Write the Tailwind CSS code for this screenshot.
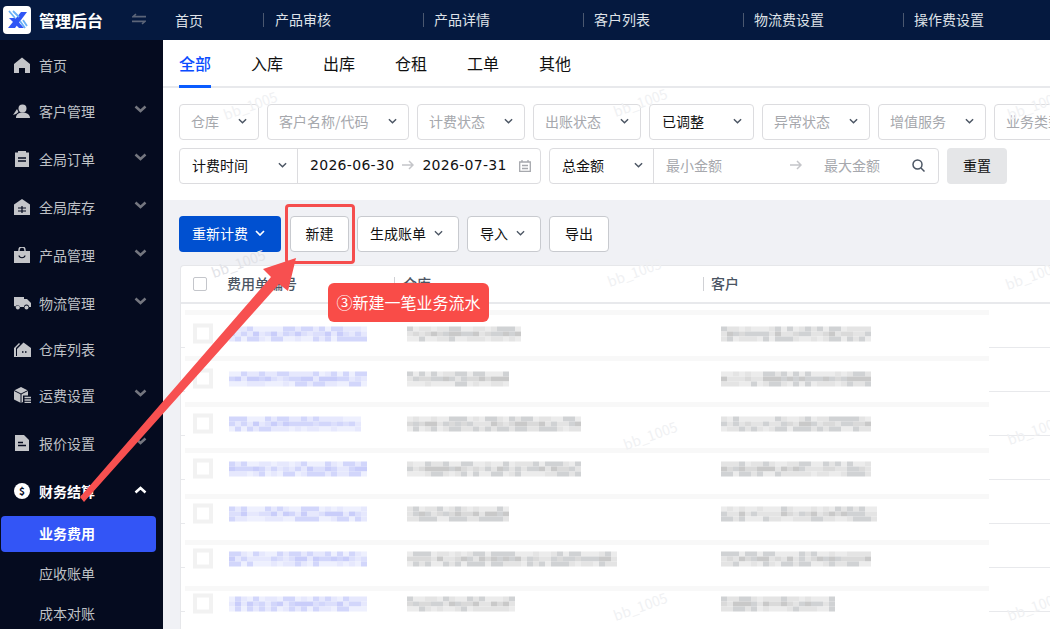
<!DOCTYPE html>
<html lang="zh-CN">
<head>
  <meta charset="UTF-8" />
  <title>业务费用 | 管理后台</title>
  <script src="https://cdn.jsdelivr.net/npm/@tailwindcss/browser@4"></script>
</head>
<body class="bg-white font-['Noto_Sans_CJK_SC','Liberation_Sans',sans-serif] text-sm text-[#111]">
<div class="relative flex h-[629px] w-[1050px] flex-col overflow-hidden">

  <!-- Top bar -->
  <header class="flex h-10 shrink-0 bg-[#05193f] text-[#dfe2e8]">
    <div class="flex w-[163px] shrink-0 items-center pl-[3px]">
      <div class="flex h-7 w-7 items-center justify-center rounded-[4px] bg-white">
        <svg width="28" height="28" viewBox="0 0 28 28">
          <path d="M24 6h-6L5 22h7z" fill="#2f55f5"/>
          <path d="M6 12h6l9 10h-5z" fill="#2f55f5"/>
          <path d="M6 5l6 7M10 5l6 6M17 15l5 7M20 14l4 6" stroke="#6ab0f7" stroke-width="1.800" fill="none"/>
        </svg>
      </div>
      <span class="ml-2 text-base leading-none font-bold text-white">管理后台</span>
      <svg class="ml-[29px] -translate-y-[1px]" width="14" height="12" viewBox="0 0 14 12" fill="none" stroke="#5c6579" stroke-width="1.600">
        <path d="M4 1 1 3.600h13M10 11l3-2.600H0"/>
      </svg>
    </div>
    <nav class="flex items-center pl-3">
      <div class="w-[88px]">首页</div>
      <div class="w-40 border-l border-[#4b5870] pl-[11px] leading-[14px]"><span class="relative top-[-1px]">产品审核</span></div>
      <div class="w-40 border-l border-[#4b5870] pl-[10px] leading-[14px]"><span class="relative top-[-1px]">产品详情</span></div>
      <div class="w-40 border-l border-[#4b5870] pl-[10px] leading-[14px]"><span class="relative top-[-1px]">客户列表</span></div>
      <div class="w-40 border-l border-[#4b5870] pl-[10px] leading-[14px]"><span class="relative top-[-1px]">物流费设置</span></div>
      <div class="w-[146px] border-l border-[#4b5870] pl-[10px] leading-[14px]"><span class="relative top-[-1px]">操作费设置</span></div>
    </nav>
  </header>

  <div class="flex min-h-0 flex-1">
    <!-- Sidebar -->
    <aside class="w-[163px] shrink-0 overflow-hidden bg-[#050b1f] text-[#bfc1c6]">
      <div class="mt-[5px] flex h-10 items-center pl-[14px]">
        <svg class="mr-[9px]" width="16" height="16" viewBox="0 0 16 16" fill="#c4c5c9"><path d="M8 .5 16 7v9h-5v-5H5v5H0V7z"/></svg>首页
      </div>
      <div class="mt-[6px] flex h-10 items-center justify-between pr-[16px] pl-[13px]">
        <span class="flex items-center"><svg class="mr-[9px]" width="17" height="14" viewBox="0 0 17 14" fill="#c4c5c9"><circle cx="9.500" cy="4.500" r="4"/><path d="M3 14c0-4 3-5.500 6.500-5.500S17 10 17 14zM0 11l4-6 1.500 3L3 10z"/></svg>客户管理</span>
        <svg class="-translate-y-[2px]" width="13" height="8" viewBox="0 0 13 8" fill="none" stroke="#74767f" stroke-width="2.500"><path d="m1.500 1.500 5 4.500 5-4.500"/></svg>
      </div>
      <div class="mt-2 flex h-10 items-center justify-between pr-[16px] pl-[14px]">
        <span class="flex items-center"><svg class="mr-[9px]" width="16" height="16" viewBox="0 0 16 16"><path d="M1 1.500h3V0h8v1.500h3V16H1z" fill="#c4c5c9"/><path d="M4 7h8M4 10h8" stroke="#050b1f" stroke-width="1.300"/></svg>全局订单</span>
        <svg class="-translate-y-[2px]" width="13" height="8" viewBox="0 0 13 8" fill="none" stroke="#74767f" stroke-width="2.500"><path d="m1.500 1.500 5 4.500 5-4.500"/></svg>
      </div>
      <div class="mt-2 flex h-10 items-center justify-between pr-[16px] pl-[14px]">
        <span class="flex items-center"><svg class="mr-[9px]" width="16" height="16" viewBox="0 0 16 16"><path d="M8 0l8 5.500V16H0V5.500z" fill="#c4c5c9"/><path d="M4 9h8M4 12h8M8 7v7" stroke="#050b1f" stroke-width="1.200"/></svg>全局库存</span>
        <svg class="-translate-y-[2px]" width="13" height="8" viewBox="0 0 13 8" fill="none" stroke="#74767f" stroke-width="2.500"><path d="m1.500 1.500 5 4.500 5-4.500"/></svg>
      </div>
      <div class="mt-2 flex h-10 items-center justify-between pr-[16px] pl-[14px]">
        <span class="flex items-center"><svg class="mr-[9px]" width="16" height="16" viewBox="0 0 16 16"><path d="M0 4h16v12H0z" fill="#c4c5c9"/><path d="M5 6V3a3 3 0 0 1 6 0v3" fill="none" stroke="#c4c5c9" stroke-width="1.400"/><path d="M5 8.500c.5 3 5.500 3 6 0" fill="none" stroke="#050b1f" stroke-width="1.200"/></svg>产品管理</span>
        <svg class="-translate-y-[2px]" width="13" height="8" viewBox="0 0 13 8" fill="none" stroke="#74767f" stroke-width="2.500"><path d="m1.500 1.500 5 4.500 5-4.500"/></svg>
      </div>
      <div class="mt-2 flex h-10 items-center justify-between pr-[16px] pl-[14px]">
        <span class="flex items-center"><svg class="mr-[8px]" width="17" height="14" viewBox="0 0 17 14" fill="#c4c5c9"><path d="M0 1h10v2h3l4 4v4h-2a2.500 2.500 0 0 0-5 0H6a2.500 2.500 0 0 0-4.500-.5L0 10z"/><circle cx="3.800" cy="11.500" r="2"/><circle cx="12.500" cy="11.500" r="2"/></svg>物流管理</span>
        <svg class="-translate-y-[2px]" width="13" height="8" viewBox="0 0 13 8" fill="none" stroke="#74767f" stroke-width="2.500"><path d="m1.500 1.500 5 4.500 5-4.500"/></svg>
      </div>
      <div class="mt-[6px] flex h-10 items-center pl-[14px]">
        <svg class="mr-[8px]" width="17" height="15" viewBox="0 0 17 15"><path d="M3 7l6.500-6.500L17 6v9H3z" fill="#c4c5c9"/><path d="M0 6l5-5 1 1-4 4v8h1v1H0z" fill="#c4c5c9"/><path d="M8 10h1.500M11 10h1.500" stroke="#050b1f" stroke-width="1.500"/></svg>仓库列表
      </div>
      <div class="mt-[6px] flex h-10 items-center justify-between pr-[16px] pl-[14px]">
        <span class="flex items-center"><svg class="mr-[8px]" width="17" height="16" viewBox="0 0 17 16"><path d="M7 0l7 3.500v5H9V15l-2 1-7-3.500v-9z" fill="#c4c5c9"/><path d="M0 3.500 7 7l7-3.500M7 7v9" fill="none" stroke="#050b1f" stroke-width="1"/><path d="M10.500 10.500H17M10.500 13H17M10.500 15.500H17" stroke="#c4c5c9" stroke-width="1.300"/></svg>运费设置</span>
        <svg class="-translate-y-[2px]" width="13" height="8" viewBox="0 0 13 8" fill="none" stroke="#74767f" stroke-width="2.500"><path d="m1.500 1.500 5 4.500 5-4.500"/></svg>
      </div>
      <div class="mt-2 flex h-10 items-center justify-between pr-[16px] pl-[15px]">
        <span class="flex items-center"><svg class="mr-[10px]" width="14" height="16" viewBox="0 0 14 16"><path d="M0 0h9l5 5v11H0z" fill="#c4c5c9"/><path d="M3 7.500h5M3 10.500h8" stroke="#050b1f" stroke-width="1.300"/></svg>报价设置</span>
        <svg class="-translate-y-[2px]" width="13" height="8" viewBox="0 0 13 8" fill="none" stroke="#74767f" stroke-width="2.500"><path d="m1.500 1.500 5 4.500 5-4.500"/></svg>
      </div>
      <div class="mt-2 flex h-10 items-center justify-between pr-[16px] pl-[14px] font-bold text-white">
        <span class="flex items-center"><span class="mr-[9px] flex h-4 w-4 items-center justify-center rounded-full bg-white text-[10px] leading-none font-bold text-[#050b1f]">$</span>财务结算</span>
        <svg class="-translate-y-[1px]" width="13" height="8" viewBox="0 0 13 8" fill="none" stroke="#fff" stroke-width="2.500"><path d="m1.500 6.500 5-4.500 5 4.500"/></svg>
      </div>
      <div class="mt-[5px] ml-px flex h-9 w-[155px] items-center rounded-[4px] bg-[#3355f6] pb-[2px] pl-[38px] font-bold text-white">业务费用</div>
      <div class="mt-[1px] flex h-10 items-center pl-[39px]">应收账单</div>
      <div class="flex h-10 items-center pl-[39px]">成本对账</div>
    </aside>

    <!-- Main -->
    <main class="relative min-w-0 flex-1 overflow-hidden bg-[#f0f1f5]">
      <div class="flex h-12 gap-10 border-b-2 border-[#e8e9ec] bg-white pl-4 text-base leading-[46px]">
        <span class="-mb-[2px] h-12 border-b-[3px] border-[#0a5cff] font-medium text-[#0a4cff]">全部</span>
        <span>入库</span><span>出库</span><span>仓租</span><span>工单</span><span>其他</span>
      </div>

      <section class="flex flex-col gap-2 bg-white py-4 pl-4 text-[#a6a8ad]">
        <div class="flex gap-2">
          <div class="flex h-9 w-20 shrink-0 items-center justify-between rounded-[4px] border border-[#dcdcdf] pr-[11px] pb-[2px] pl-[11px]">仓库<svg width="9" height="6" viewBox="0 0 10 6" fill="none" stroke="#4b5563" stroke-width="1.600"><path d="m1 1 4 4 4-4"/></svg></div>
          <div class="flex h-9 w-[142px] shrink-0 items-center justify-between rounded-[4px] border border-[#dcdcdf] pr-[11px] pb-[2px] pl-[11px]">客户名称/代码<svg width="9" height="6" viewBox="0 0 10 6" fill="none" stroke="#4b5563" stroke-width="1.600"><path d="m1 1 4 4 4-4"/></svg></div>
          <div class="flex h-9 w-[108px] shrink-0 items-center justify-between rounded-[4px] border border-[#dcdcdf] pr-[11px] pb-[2px] pl-[11px]">计费状态<svg width="9" height="6" viewBox="0 0 10 6" fill="none" stroke="#4b5563" stroke-width="1.600"><path d="m1 1 4 4 4-4"/></svg></div>
          <div class="flex h-9 w-[108px] shrink-0 items-center justify-between rounded-[4px] border border-[#dcdcdf] pr-[11px] pb-[2px] pl-[11px]">出账状态<svg width="9" height="6" viewBox="0 0 10 6" fill="none" stroke="#4b5563" stroke-width="1.600"><path d="m1 1 4 4 4-4"/></svg></div>
          <div class="flex h-9 w-[105px] shrink-0 items-center justify-between rounded-[4px] border border-[#dcdcdf] pr-[11px] pb-[2px] pl-[12px] text-[#111]">已调整<svg width="9" height="6" viewBox="0 0 10 6" fill="none" stroke="#4b5563" stroke-width="1.600"><path d="m1 1 4 4 4-4"/></svg></div>
          <div class="flex h-9 w-[108px] shrink-0 items-center justify-between rounded-[4px] border border-[#dcdcdf] pr-[11px] pb-[2px] pl-[11px]">异常状态<svg width="9" height="6" viewBox="0 0 10 6" fill="none" stroke="#4b5563" stroke-width="1.600"><path d="m1 1 4 4 4-4"/></svg></div>
          <div class="flex h-9 w-[108px] shrink-0 items-center justify-between rounded-[4px] border border-[#dcdcdf] pr-[11px] pb-[2px] pl-[11px]">增值服务<svg width="9" height="6" viewBox="0 0 10 6" fill="none" stroke="#4b5563" stroke-width="1.600"><path d="m1 1 4 4 4-4"/></svg></div>
          <div class="flex h-9 w-[108px] shrink-0 items-center justify-between rounded-[4px] border border-[#dcdcdf] pr-[11px] pb-[2px] pl-[11px]">业务类型<svg width="9" height="6" viewBox="0 0 10 6" fill="none" stroke="#4b5563" stroke-width="1.600"><path d="m1 1 4 4 4-4"/></svg></div>
        </div>
        <div class="flex gap-2">
          <div class="flex h-9 w-[362px] shrink-0 items-center rounded-[4px] border border-[#dcdcdf]">
            <div class="flex h-full w-[118px] items-center justify-between border-r border-[#dcdcdf] pr-[10px] pb-[2px] pl-3 text-[#111]">计费时间<svg width="9" height="6" viewBox="0 0 10 6" fill="none" stroke="#4b5563" stroke-width="1.600"><path d="m1 1 4 4 4-4"/></svg></div>
            <span class="ml-3 -translate-y-px font-['DejaVu_Sans',sans-serif] tracking-[0.3px] text-[#111]">2026-06-30</span>
            <svg class="mx-[8px] -translate-y-px" width="12" height="10" viewBox="0 0 12 10" fill="none" stroke="#c4c5c9" stroke-width="1.500"><path d="M0 5h11M7 1l4 4-4 4"/></svg>
            <span class="-translate-y-px font-['DejaVu_Sans',sans-serif] tracking-[0.3px] text-[#111]">2026-07-31</span>
            <svg class="ml-[12px]" width="12" height="12" viewBox="0 0 12 12" fill="none" stroke="#a6a8ad" stroke-width="1.300"><path d="M.7 2h10.600v9.300H.7zM3 0v2M9 0v2M3 5.500h6M3 8.500h6"/></svg>
          </div>
          <div class="flex h-9 w-[390px] shrink-0 items-center rounded-[4px] border border-[#dcdcdf]">
            <div class="flex h-full w-[104px] items-center justify-between border-r border-[#dcdcdf] pr-[10px] pb-[2px] pl-3 text-[#111]">总金额<svg width="9" height="6" viewBox="0 0 10 6" fill="none" stroke="#4b5563" stroke-width="1.600"><path d="m1 1 4 4 4-4"/></svg></div>
            <span class="ml-3 -translate-y-px">最小金额</span>
            <svg class="ml-[68px] -translate-y-px" width="12" height="10" viewBox="0 0 12 10" fill="none" stroke="#c4c5c9" stroke-width="1.500"><path d="M0 5h11M7 1l4 4-4 4"/></svg>
            <span class="ml-[22px] -translate-y-px">最大金额</span>
            <svg class="ml-[32px] -translate-y-px" width="13" height="13" viewBox="0 0 13 13" fill="none" stroke="#4b5563" stroke-width="1.500"><circle cx="5.500" cy="5.500" r="4.500"/><path d="m9 9 3.500 3.500"/></svg>
          </div>
          <button class="h-9 w-[60px] shrink-0 rounded-[4px] bg-[#e5e6e8] pb-[2px] text-[#111]">重置</button>
        </div>
      </section>

      <div class="flex gap-2 pt-4 pl-4">
        <button class="mr-px flex h-9 w-[102px] items-center gap-[7px] rounded-[4px] bg-[#0050d0] pb-[2px] pl-[13px] text-white">重新计费<svg width="10" height="6" viewBox="0 0 10 6" fill="none" stroke="#fff" stroke-width="1.700"><path d="m1 1 4 4 4-4"/></svg></button>
        <button class="h-9 w-[59px] rounded-[4px] border border-[#c8cacf] bg-white pb-[2px]">新建</button>
        <button class="flex h-9 w-[102px] items-center gap-[8px] rounded-[4px] border border-[#c8cacf] bg-white pb-[2px] pl-3">生成账单<svg width="9" height="6" viewBox="0 0 10 6" fill="none" stroke="#4b5563" stroke-width="1.400"><path d="m1 1 4 4 4-4"/></svg></button>
        <button class="flex h-9 w-[74px] items-center gap-[8px] rounded-[4px] border border-[#c8cacf] bg-white pb-[2px] pl-3">导入<svg width="9" height="6" viewBox="0 0 10 6" fill="none" stroke="#4b5563" stroke-width="1.400"><path d="m1 1 4 4 4-4"/></svg></button>
        <button class="h-9 w-[60px] rounded-[4px] border border-[#c8cacf] bg-white pb-[2px]">导出</button>
      </div>

      <!-- Table -->
      <div class="mt-[13px] ml-[17px] h-[400px] rounded-tl-[4px] border-t border-l border-[#e6e7ea] bg-white">
        <div class="flex h-[38px] items-center border-b-2 border-[#e8e9ec] font-medium text-[#4b5563]">
          <span class="ml-[12px] h-[14px] w-[14px] rounded-[2px] border border-[#c4c6cb]"></span>
          <span class="ml-5 w-[167px] pb-[2px]">费用单编号</span>
          <span class="h-[14px] border-l border-[#d0d1d5] pl-2 leading-[12px]">仓库</span>
          <span class="ml-[272px] h-[14px] border-l border-[#d0d1d5] pl-[7px] leading-[12px]">客户</span>
        </div>
        <div class="h-11 border-b border-[#e8e9ec]"></div>
        <div class="h-11 border-b border-[#e8e9ec]"></div>
        <div class="h-11 border-b border-[#e8e9ec]"></div>
        <div class="h-11 border-b border-[#e8e9ec]"></div>
        <div class="h-11 border-b border-[#e8e9ec]"></div>
        <div class="h-11 border-b border-[#e8e9ec]"></div>
        <div class="h-11 border-b border-[#e8e9ec]"></div>
      </div>
      <!-- Pasted blurred screenshot of the rows -->
      <div id="rows" class="absolute top-[265px] left-[22px] h-[330px] w-[804px] bg-white"></div>
    </main>
  </div>

  <!-- Watermarks -->
  <span class="absolute top-[95px] left-[222px] -rotate-[20deg] text-sm text-[#f0f1f3]">bb_1005</span>
  <span class="absolute top-[92px] left-[612px] -rotate-[20deg] text-sm text-[#f0f1f3]">bb_1005</span>
  <span class="absolute top-[95px] left-[1006px] -rotate-[20deg] text-sm text-[#f0f1f3]">bb_1005</span>
  <span class="absolute top-[253px] left-[210px] -rotate-[20deg] text-sm text-[#e2e3e8]">bb_1005</span>
  <span class="absolute top-[262px] left-[606px] -rotate-[20deg] text-sm text-[#f0f1f3]">bb_1005</span>
  <span class="absolute top-[265px] left-[1004px] -rotate-[20deg] text-sm text-[#f0f1f3]">bb_1005</span>
  <span class="absolute top-[425px] left-[622px] -rotate-[20deg] text-sm text-[#f0f1f3]">bb_1005</span>
  <span class="absolute top-[420px] left-[1006px] -rotate-[20deg] text-sm text-[#f0f1f3]">bb_1005</span>
  <span class="absolute top-[596px] left-[612px] -rotate-[20deg] text-sm text-[#f0f1f3]">bb_1005</span>
  <span class="absolute top-[596px] left-[1006px] -rotate-[20deg] text-sm text-[#f0f1f3]">bb_1005</span>

  <!-- Annotation -->
  <div class="absolute top-[204px] left-[285px] h-[60px] w-[70px] rounded-[4px] border-[3px] border-[#f54d4d]"></div>
  <div class="absolute top-[283px] left-[328px] flex h-[39px] w-[161px] items-center justify-center rounded-[6px] bg-[#f94c48] pb-[2px] text-base text-white">③新建一笔业务流水</div>
  <svg class="absolute top-0 left-0" width="1050" height="629"><polygon points="296,258 263,269 271,277 80,497 84,502 279,284 288,291" fill="#f75050"/></svg>
</div>

<script>
  // fake mosaic of the blurred rows: [link width, warehouse width, customer width]
  const rows = [[135,111,147],[135,100,147],[130,171,147],[135,171,147],[135,100,155],[135,206,147],[135,106,110]];
  let seed = 7;
  const rnd = () => (seed = (seed * 16807) % 2147483647) / 2147483647;
  const blue = ["#c9cdfa","#dcdffc","#e6e8fd","#d2d6fb","#eef0fe"];
  const gray = ["#c9c9c9","#dadada","#e4e4e4","#d0d2d4","#ececec"];
  let out = "";
  function strip(x, y, w, colors) {
    for (let i = 0; i < w; i += 6) {
      for (let j = 0; j < 3; j++) {
        const c = j == 1 ? colors[Math.floor(rnd() * 4)] : colors[2 + Math.floor(rnd() * 3)];
        out += `<rect x="${x + i}" y="${y + j * 5}" width="6" height="5" fill="${c}"/>`;
      }
    }
  }
  rows.forEach((r, n) => {
    const y = 45 * n + 23.5;
    out += `<rect x="0" y="${5 + 46 * n}" width="804" height="5" fill="#f8f8f8"/>`;
    out += `<rect x="10" y="${y - 3}" width="16" height="16" fill="#fff" stroke="#f2f2f2" stroke-width="4"/>`;
    strip(44, y - 2, r[0], blue);
    strip(222, y - 2, r[1], gray);
    strip(536, y - 2, r[2], gray);
  });
  document.getElementById("rows").innerHTML = `<svg width="804" height="400" class="blur-[0.6px]">${out}</svg>`;
</script>
</body>
</html>
